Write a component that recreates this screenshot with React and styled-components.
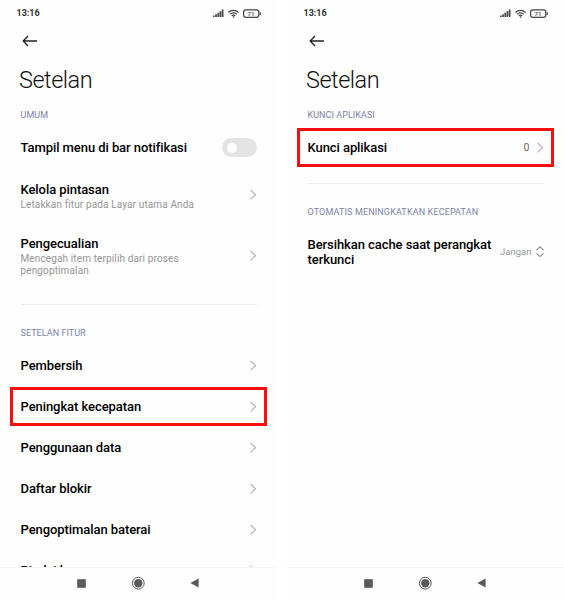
import React from "react";
import styled, { createGlobalStyle, css } from "styled-components";

const GlobalStyle = createGlobalStyle`
  * { box-sizing: border-box; }
  body { margin: 0; background: #fff; }
`;

const Stage = styled.main`
  display: grid;
  grid-template-columns: 277px 277px;
  column-gap: 10px;
  width: 564px;
  height: 600px;
  overflow: hidden;
  background: #fff;
  font-family: Roboto, sans-serif;
  color: #000;
`;

const Phone = styled.section`
  display: flex;
  flex-direction: column;
  height: 600px;
  min-width: 0;
  background: #fefefe;
`;

const StatusBar = styled.header`
  display: flex;
  align-items: center;
  justify-content: space-between;
  height: 26px;
  padding: 0 16px 0 16.5px;
`;

const Clock = styled.time`
  font-size: 9px;
  font-weight: 700;
  line-height: 12px;
  letter-spacing: 0;
  color: #333;
`;

const StatusIcons = styled.div`
  display: flex;
  align-items: center;
  gap: 4px;
`;

const BackBar = styled.div`
  display: flex;
  align-items: center;
  height: 30px;
  padding-left: 22px;
`;

const Title = styled.h1`
  margin: 0;
  padding: 9px 19px 0;
  height: 49px;
  font-size: 23.5px;
  font-weight: 300;
  line-height: 30px;
  letter-spacing: -0.5px;
  color: #111;
`;

const List = styled.div`
  flex: 1;
  min-height: 0;
  overflow: hidden;
  padding: 0 20.5px;
`;

const SectionLabel = styled.h2`
  margin: 0;
  height: 22px;
  padding-top: 4px;
  font-size: 9px;
  font-weight: 400;
  line-height: 12px;
  letter-spacing: ${(p) => p.$tracking || "0.05px"};
  color: #7c82a4;
`;

const Divider = styled.hr`
  height: 1px;
  margin: 15px 0 18px;
  border: 0;
  background: #ebebeb;
`;

const Row = styled.div`
  position: relative;
  display: flex;
  align-items: center;
  justify-content: space-between;
  height: ${(p) => p.$height || 41}px;
  ${(p) =>
    p.$highlighted &&
    css`
      &::after {
        content: "";
        position: absolute;
        inset: 1px -10.5px;
        border: 3px solid #fa0000;
        opacity: 0.95;
      }
    `}
`;

const RowText = styled.div`
  min-width: 0;
  padding-top: ${(p) => (p.$withNote ? "2px" : "0")};
`;

const RowTitle = styled.div`
  font-size: 13px;
  font-weight: 500;
  line-height: 15px;
  letter-spacing: -0.07px;
  white-space: pre-line;
`;

const RowNote = styled.div`
  margin-top: 2px;
  font-size: 10px;
  line-height: 12px;
  letter-spacing: 0.13px;
  white-space: pre-line;
  color: #959595;
`;

const Trailing = styled.div`
  display: flex;
  align-items: center;
  gap: ${(p) => p.$gap || 0}px;
`;

const Value = styled.span`
  font-size: ${(p) => p.$size}px;
  line-height: 14px;
  color: ${(p) => p.$color};
`;

const Switch = styled.span`
  display: flex;
  align-items: center;
  width: 35px;
  height: 19px;
  padding-left: 5px;
  border-radius: 10px;
  background: #e4e4e4;
`;

const Knob = styled.span`
  width: 10px;
  height: 10px;
  border-radius: 50%;
  background: #fff;
`;

const NavBar = styled.nav`
  display: flex;
  align-items: center;
  justify-content: center;
  gap: 45px;
  height: 33px;
  padding: 0 2px 2px 0;
  border-top: 1px solid #f5f5f5;
`;

const Icon = styled.svg`
  display: block;
  flex: none;
`;

const Signal = () => (
  <Icon width="11" height="8" viewBox="0 0 11 8" fill="#484848">
    <path d="M0 6.4h1.7V8H0zM2.2 5.3h1.7V8H2.2zM4.4 3.8h1.7V8H4.4zM6.6 2.2h1.7V8H6.6zM8.8 .4h1.7V8H8.8z" />
  </Icon>
);

const Wifi = () => (
  <Icon width="11" height="9" viewBox="0 0 11 9" fill="none" stroke="#444" strokeWidth="1.2">
    <path d="M.4 3.5a7.2 7.2 0 0 1 10.2 0M2.1 5.2a4.8 4.8 0 0 1 6.8 0M3.8 6.9a2.4 2.4 0 0 1 3.4 0" />
    <circle cx="5.5" cy="8.1" r=".8" fill="#444" stroke="none" />
  </Icon>
);

const Battery = () => (
  <Icon width="18" height="9" viewBox="0 0 18 9">
    <rect x=".6" y=".9" width="15.2" height="7.4" rx="2.2" fill="none" stroke="#444" strokeWidth="1.2" />
    <path d="M16.6 3.2h1.2v2.8h-1.2z" fill="#444" />
    <text x="8.1" y="6.9" textAnchor="middle" fontSize="6.2" fontWeight="500" fill="#444">
      71
    </text>
  </Icon>
);

const BackArrow = () => (
  <Icon width="16" height="12" viewBox="0 0 16 12" fill="none" stroke="#222" strokeWidth="1.3">
    <path d="M15 6H1.2M6 1L1.2 6 6 11" />
  </Icon>
);

const Chevron = () => (
  <Icon width="7" height="12" viewBox="0 0 7 12" fill="none" stroke="#b0b0b0" strokeWidth="1.1">
    <path d="M.6 1L5.5 5.7.6 10.4" />
  </Icon>
);

const UpDown = () => (
  <Icon width="8" height="12" viewBox="0 0 8 12" fill="none" stroke="#8c8c8c" strokeWidth="1.1">
    <path d="M.5 4.1L4 .8l3.5 3.3M.5 7.3L4 10.6l3.5-3.3" />
  </Icon>
);

const Screen = ({ children }) => (
  <Phone>
    <StatusBar>
      <Clock>13:16</Clock>
      <StatusIcons>
        <Signal />
        <Wifi />
        <Battery />
      </StatusIcons>
    </StatusBar>
    <BackBar>
      <BackArrow />
    </BackBar>
    <Title>Setelan</Title>
    <List>{children}</List>
    <NavBar>
      <Icon width="9" height="9" viewBox="0 0 9 9">
        <path d="M.2 .2h8.6v8.6H.2z" fill="#5a5a5a" />
      </Icon>
      <Icon width="14" height="14" viewBox="0 0 14 14">
        <circle cx="7.3" cy="7.2" r="5.9" fill="none" stroke="#5a5a5a" />
        <circle cx="7.3" cy="7.2" r="4.2" fill="#5a5a5a" />
      </Icon>
      <Icon width="9" height="10" viewBox="0 0 9 10">
        <path d="M.4 5L8.6 .4v9.2z" fill="#5a5a5a" />
      </Icon>
    </NavBar>
  </Phone>
);

const LinkRow = ({ title, note, height, highlighted }) => (
  <Row $height={height} $highlighted={highlighted}>
    <RowText $withNote={Boolean(note)}>
      <RowTitle>{title}</RowTitle>
      {note && <RowNote>{note}</RowNote>}
    </RowText>
    <Chevron />
  </Row>
);

const features = [
  "Pembersih",
  "Peningkat kecepatan",
  "Penggunaan data",
  "Daftar blokir",
  "Pengoptimalan baterai",
  "Pindai keamanan",
];

export default function App() {
  return (
    <>
      <GlobalStyle />
      <Stage>
        <Screen>
          <SectionLabel>UMUM</SectionLabel>
          <Row>
            <RowTitle>Tampil menu di bar notifikasi</RowTitle>
            <Switch>
              <Knob />
            </Switch>
          </Row>
          <LinkRow title="Kelola pintasan" note="Letakkan fitur pada Layar utama Anda" height={54} />
          <LinkRow
            title="Pengecualian"
            note={"Mencegah item terpilih dari proses\npengoptimalan"}
            height={67}
          />
          <Divider />
          <SectionLabel>SETELAN FITUR</SectionLabel>
          {features.map((name) => (
            <LinkRow key={name} title={name} highlighted={name === "Peningkat kecepatan"} />
          ))}
        </Screen>
        <Screen>
          <SectionLabel>KUNCI APLIKASI</SectionLabel>
          <Row $highlighted>
            <RowTitle>Kunci aplikasi</RowTitle>
            <Trailing $gap={7}>
              <Value $size={10.5} $color="#666">0</Value>
              <Chevron />
            </Trailing>
          </Row>
          <Divider />
          <SectionLabel $tracking="0.14px">OTOMATIS MENINGKATKAN KECEPATAN</SectionLabel>
          <Row $height={56}>
            <RowTitle>{"Bersihkan cache saat perangkat\nterkunci"}</RowTitle>
            <Trailing $gap={4}>
              <Value $size={9.5} $color="#999">Jangan</Value>
              <UpDown />
            </Trailing>
          </Row>
        </Screen>
      </Stage>
    </>
  );
}
